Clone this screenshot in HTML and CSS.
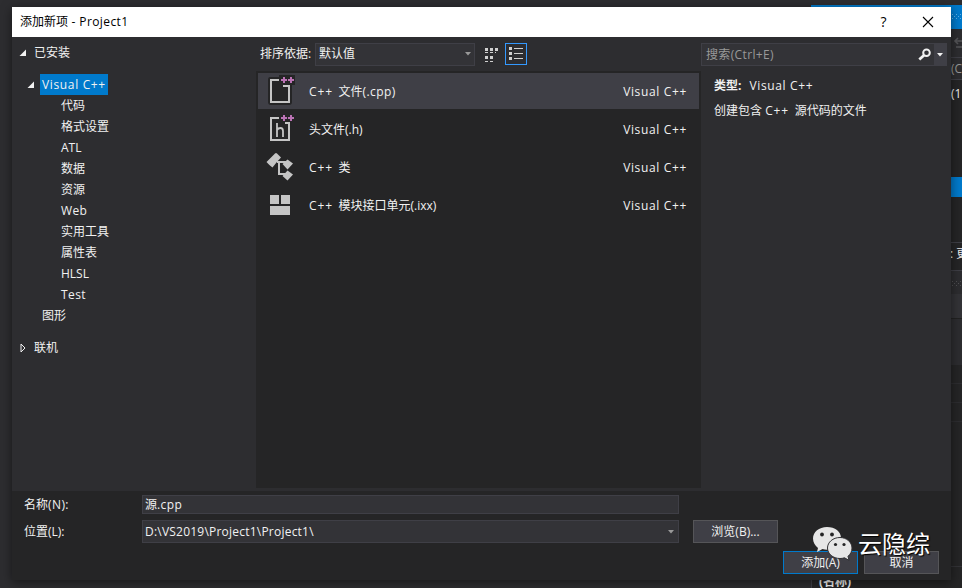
FILE: index.html
```html
<!DOCTYPE html>
<html lang="zh-CN">
<head>
<meta charset="utf-8">
<title>添加新项 - Project1</title>
<link rel="stylesheet" href="styles.css">
</head>
<body>
<div class="desktop">
  <aside class="explorer">
    <div class="ex-title"><svg width="12" height="14" viewBox="0 0 12 14" fill="#5db0e8"><path d="M1 4h1v1H1zM5 4h1v1H5zM9 4h1v1H9zM3 6h1v1H3zM7 6h1v1H7zM11 6h1v1h-1zM1 8h1v1H1zM5 8h1v1H5zM9 8h1v1H9z"/></svg></div>
    <div class="ex-tools"><svg width="12" height="14" viewBox="0 0 12 14" fill="none" stroke="#555558" stroke-width="1.6"><path d="M12 4H2M5 1L2 4l3 3M3 10h9"/></svg></div>
    <div class="ex-search">(Ct</div>
    <div class="ex-tree">(1</div>
    <div class="ex-selected"></div>
    <div class="ex-rest"></div>
    <div class="ex-tabs">: 更</div>
    <div class="ex-props"><svg width="12" height="8" viewBox="0 0 12 8" fill="#505053"><path d="M1 1h1v1H1zM5 1h1v1H5zM9 1h1v1H9zM3 3h1v1H3zM7 3h1v1H7zM11 3h1v1h-1zM1 5h1v1H1zM5 5h1v1H5zM9 5h1v1H9z"/></svg></div>
    <div class="ex-object"></div>
    <div class="ex-bar"></div>
    <div class="ex-rows"><i></i><i></i><i></i></div>
    <div class="ex-grid"></div>
    <div class="ex-name">(名称)</div>
  </aside>

  <main class="dialog">
    <header class="titlebar">
      <span class="title">添加新项<span class="latin"> - Project1</span></span>
      <span class="help">?</span>
      <svg class="close" width="12" height="12" viewBox="0 0 12 12"><path d="M1 1l10 10M11 1L1 11" stroke="#000" stroke-width="1.1" fill="none"/></svg>
    </header>

    <div class="body">
      <nav class="tree">
        <div class="node root"><svg class="tri" width="8" height="8" viewBox="0 0 8 8"><path d="M7 .5V7H.5z"/></svg><span>已安装</span></div>
        <div class="node lang"><svg class="tri" width="8" height="8" viewBox="0 0 8 8"><path d="M7 .5V7H.5z"/></svg><span class="selected lat">Visual C++</span></div>
        <div class="node leaf">代码</div>
        <div class="node leaf">格式设置</div>
        <div class="node leaf">ATL</div>
        <div class="node leaf">数据</div>
        <div class="node leaf">资源</div>
        <div class="node leaf latin">Web</div>
        <div class="node leaf">实用工具</div>
        <div class="node leaf">属性表</div>
        <div class="node leaf">HLSL</div>
        <div class="node leaf latin">Test</div>
        <div class="node group">图形</div>
        <div class="node online"><svg width="6" height="10" viewBox="0 0 6 10" fill="none" stroke="#f1f1f1"><path d="M1 1v8l4-4z"/></svg><span>联机</span></div>
      </nav>

      <section class="center">
        <div class="sortbar">
          <label>排序依据:</label>
          <div class="combo"><span>默认值</span><svg width="6" height="4" viewBox="0 0 6 4"><path d="M0 0h6L3 3.4z" fill="#999"/></svg></div>
          <svg class="small-icons" width="14" height="15" viewBox="0 0 14 15" fill="#d0d0d0"><path d="M0 1h3v3H0zM5 1h3v3H5zM10 1h3v3h-3zM0 5h3v1H0zM5 5h3v1H5zM10 5h1v1h-1zM0 9h3v3H0zM5 9h3v3H5zM0 14h3v1H0zM5 14h3v1H5z"/></svg>
          <div class="view"><svg width="14" height="14" viewBox="0 0 14 14" fill="#d0d0d0"><path d="M0 0h3v3H0zM0 5h3v3H0zM0 10h3v3H0zM5 1h9v1H5zM5 6h9v1H5zM5 11h9v1H5z"/></svg></div>
        </div>
        <div class="list">
          <div class="item active">
            <svg width="30" height="32" viewBox="0 0 30 32"><path d="M5 2h9V0h16v10h-3v17q0 3-3 3H6q-3 0-3-3V5q0-3 2-3z" fill="#252526"/><path d="M14 5H6v22h18V11h-6" fill="none" stroke="#c5c5c5" stroke-width="2"/><path d="M18 2h2v2h2v2h-2v2h-2V6h-2V4h2zM25 2h2v2h2v2h-2v2h-2V6h-2V4h2z" fill="#bb73b5"/></svg>
            <span class="name"><span class="cpp">C++ </span>文件<span class="latin">(.cpp)</span></span><span class="kind lat">Visual C++</span>
          </div>
          <div class="item">
            <svg width="30" height="32" viewBox="0 0 30 32"><path d="M14 5H6v22h18V10h-4" fill="none" stroke="#c5c5c5" stroke-width="2"/><path d="M18 2h2v2h2v2h-2v2h-2V6h-2V4h2zM25 2h2v2h2v2h-2v2h-2V6h-2V4h2z" fill="#bb73b5"/><path d="M12 10v14M12 17q1-2 3.500-2t2.500 3V24" fill="none" stroke="#c5c5c5" stroke-width="1.800"/></svg>
            <span class="name">头文件<span>(.h)</span></span><span class="kind lat">Visual C++</span>
          </div>
          <div class="item">
            <svg width="30" height="32" viewBox="0 0 30 32" fill="#c5c5c5"><path d="M1.500 11l8.500-8.500q1-1 2 0l4 4q-4 4-8.500 10-3-2-6-5.500zM17.500 13l5-4.500 5.500 4-5.500 6zM17.500 25l5-5.500 5.500 4-5.500 6z"/><path d="M12 11h9M14 11v12h6" fill="none" stroke="#c5c5c5" stroke-width="2"/></svg>
            <span class="name"><span class="cpp">C++ </span>类</span><span class="kind lat">Visual C++</span>
          </div>
          <div class="item">
            <svg width="30" height="32" viewBox="0 0 30 32" fill="#c5c5c5"><path d="M5 6h9v9H5zM16 6h9v9h-9zM5 17h20v9H5z"/></svg>
            <span class="name"><span class="cpp">C++ </span>模块接口单元(.ixx)</span><span class="kind lat">Visual C++</span>
          </div>
        </div>
      </section>

      <section class="details">
        <div class="search"><span>搜索(Ctrl+E)</span><svg width="14" height="13" viewBox="0 0 14 13" fill="none" stroke="#f1f1f1"><circle cx="8.500" cy="4.700" r="3.300" stroke-width="2"/><path d="M6 7.300L1.300 11.500" stroke-width="2.800"/></svg><div class="drop"><svg width="6" height="4" viewBox="0 0 6 4"><path d="M0 0h6L3 3.400z" fill="#f1f1f1"/></svg></div></div>
        <div class="type"><b>类型:</b><span class="lat">Visual C++</span></div>
        <div class="desc">创建包含 <span class="cpp">C++ </span>源代码的文件</div>
      </section>
    </div>

    <footer class="footer">
      <div class="row name-row"><label>名称<span class="latin">(N):</span></label><div class="field"><span>源<span class="latin">.cpp</span></span></div></div>
      <div class="row path-row"><label>位置<span>(L):</span></label><div class="field"><span class="path">D:\VS2019\Project1\Project1\</span><svg width="6" height="4" viewBox="0 0 6 4"><path d="M0 0h6L3 3.400z" fill="#999"/></svg></div><div class="button browse">浏览(B)...</div></div>
      <div class="actions"><div class="button primary">添加(A)</div><div class="button">取消</div></div>
    </footer>
  </main>

  <div class="watermark">
    <svg width="40" height="35" viewBox="0 0 40 35"><path d="M14 1C6 1 0 6 0 12.500c0 4 2 7 5 9.500L4 26l5.500-3q2 .7 4.500.7C22 23.700 28 18.500 28 12S22 1 14 1z" fill="#e6e6e6"/><path d="M27 11.500c-7 0-12.500 4.700-12.500 10.500S20 32.500 27 32.500q2.300 0 4.500-.7l4.500 2.500-1-4c2.500-2 4-5 4-8.300 0-5.800-5.500-10.500-12-10.500z" fill="#e6e6e6" stroke="#303033"/><g fill="#252526"><circle cx="9" cy="8.500" r="1.900"/><circle cx="19" cy="8.500" r="1.900"/><circle cx="22.500" cy="18.500" r="1.600"/><circle cx="31" cy="18.500" r="1.600"/></g></svg>
    <span>云隐综</span>
  </div>
</div>
</body>
</html>
```

FILE: styles.css
```css
* { box-sizing: border-box; }
body {
  margin: 0;
  font: 12px/16px "Open Sans", "Noto Sans CJK SC", sans-serif;
  color: #f1f1f1;
}
svg { display: block; flex: none; }
.desktop {
  position: relative;
  width: 962px;
  height: 588px;
  overflow: hidden;
  background: #2d2d30;
}
.lat { letter-spacing: .65px; }
.latin { letter-spacing: .4px; }
.cpp { letter-spacing: .9px; word-spacing: 1.5px; white-space: pre; }

/* window behind the dialog */
.explorer {
  width: 151px;
  height: 588px;
  margin-left: 811px;
  padding-top: 5px;
  display: flex;
  flex-direction: column;
  background: #252526;
  box-shadow: inset 0 5px #2d2d30;
}
.explorer > div { flex: none; padding-left: 140px; white-space: nowrap; overflow: hidden; }
.ex-title { height: 24px; background: #007acc; }
.explorer > .ex-title { padding-top: 5px; }
.ex-tools { height: 28px; background: #2d2d30; }
.explorer > .ex-tools { padding: 8px 0 0 142px; }
.ex-search { height: 23px; border: solid #3f3f46; border-width: 1px 0; background: #2d2d30; color: #999; line-height: 22px; }
.ex-tree { height: 97px; line-height: 27px; }
.ex-selected { height: 20px; background: #007acc; }
.ex-rest { height: 45px; }
.ex-tabs { height: 29px; border: solid #3f3f46; border-width: 1px 0; line-height: 22px; }
.explorer > .ex-tabs { padding-left: 139px; }
.ex-props { height: 23px; background: #2d2d30; }
.explorer > .ex-props { padding-top: 9px; }
.ex-object { height: 25px; border-bottom: 1px solid #222; background: #333337; }
.ex-bar { height: 46px; background: #2d2d30; }
.ex-rows i { display: block; height: 19px; border-bottom: 1px solid #2d2d30; }
.ex-grid { height: 145px; border-bottom: 1px solid #333337; }
.explorer > .ex-name { flex: 1; padding: 7px 0 0 7px; border-left: 1px solid #3f3f46; font-weight: 700; }

.dialog {
  position: absolute;
  left: 12px;
  top: 7px;
  width: 939px;
  height: 573px;
  display: flex;
  flex-direction: column;
  background: #252526;
  box-shadow: 0 2px 10px rgba(0, 0, 0, .5);
}
.titlebar {
  height: 30px;
  display: flex;
  align-items: center;
  padding: 0 17px 0 8px;
  background: #fff;
  color: #000;
}
.title { flex: 1; }
.help { width: 7px; margin-right: 35px; font-size: 14px; text-align: center; }

.body { height: 454px; display: grid; grid-template-columns: 244px 445px 250px; background: #2d2d30; }

.tree { padding-top: 5px; }
.node { height: 21px; display: flex; align-items: center; }
.tri { fill: #f1f1f1; }
.root { padding-left: 7px; margin-bottom: 11px; }
.root span { margin-left: 7px; }
.lang { padding-left: 15px; }
.selected { height: 21px; margin-left: 5px; padding: 0 2px; width: 68px; line-height: 21px; background: #007acc; white-space: nowrap; }
.leaf { padding-left: 49px; }
.group { padding-left: 30px; }
.online { padding-left: 8px; margin-top: 11px; }
.online span { margin-left: 8px; }

.sortbar { height: 34px; display: flex; align-items: center; padding-left: 4px; }
.sortbar label { width: 55px; white-space: nowrap; }
.combo {
  width: 160px;
  height: 23px;
  display: flex;
  align-items: center;
  justify-content: space-between;
  padding: 0 3px;
  border: 1px solid #3f3f46;
  background: #333337;
}
.small-icons { margin-left: 10px; }
.view {
  width: 22px;
  height: 22px;
  margin-left: 6px;
  display: flex;
  align-items: center;
  justify-content: center;
  border: 1px solid #3399ff;
}
.list { height: 417px; padding: 2px; background: #252526; }
.item { height: 36px; margin-bottom: 2px; display: flex; align-items: center; padding: 0 12px 0 7px; }
.item .name { flex: 1; margin-left: 14px; }
.item .name, .item .kind { padding-top: 2px; }
.active { background: #3f3f46; }

.search {
  height: 23px;
  width: 246px;
  margin-top: 6px;
  display: flex;
  align-items: center;
  padding-left: 4px;
  border: 1px solid #3f3f46;
  background: #333337;
  color: #999;
}
.search span { flex: 1; letter-spacing: .35px; }
.drop { width: 12px; height: 21px; margin-left: 2px; display: flex; align-items: center; justify-content: center; background: #3f3f46; }
.type { margin: 12px 0 0 13px; }
.type b { margin-right: 8px; }
.desc { margin: 9px 0 0 13px; }

.footer { height: 89px; padding-top: 4px; }
.row { display: flex; align-items: center; padding-left: 12px; }
.row label { width: 118px; }
.field {
  width: 537px;
  height: 100%;
  display: flex;
  align-items: center;
  justify-content: space-between;
  padding: 0 4px 0 2px;
  border: 1px solid #3f3f46;
  background: #333337;
}
.path { letter-spacing: .22px; }
.name-row { height: 19px; }
.path-row { height: 23px; margin-top: 6px; }
.button {
  width: 75px;
  height: 23px;
  display: flex;
  align-items: center;
  justify-content: center;
  border: 1px solid #555558;
  background: #3f3f46;
}
.browse { width: 85px; margin-left: 14px; }
.actions { display: flex; justify-content: flex-end; gap: 6px; margin-top: 8px; padding-right: 12px; }
.primary { border-color: #007acc; }

.watermark {
  position: absolute;
  left: 813px;
  top: 526px;
  display: flex;
  align-items: center;
  gap: 5px;
  color: #fff;
  font-size: 24px;
  line-height: 35px;
  white-space: nowrap;
  text-shadow: 1px 1px 1px #000;
}
```
